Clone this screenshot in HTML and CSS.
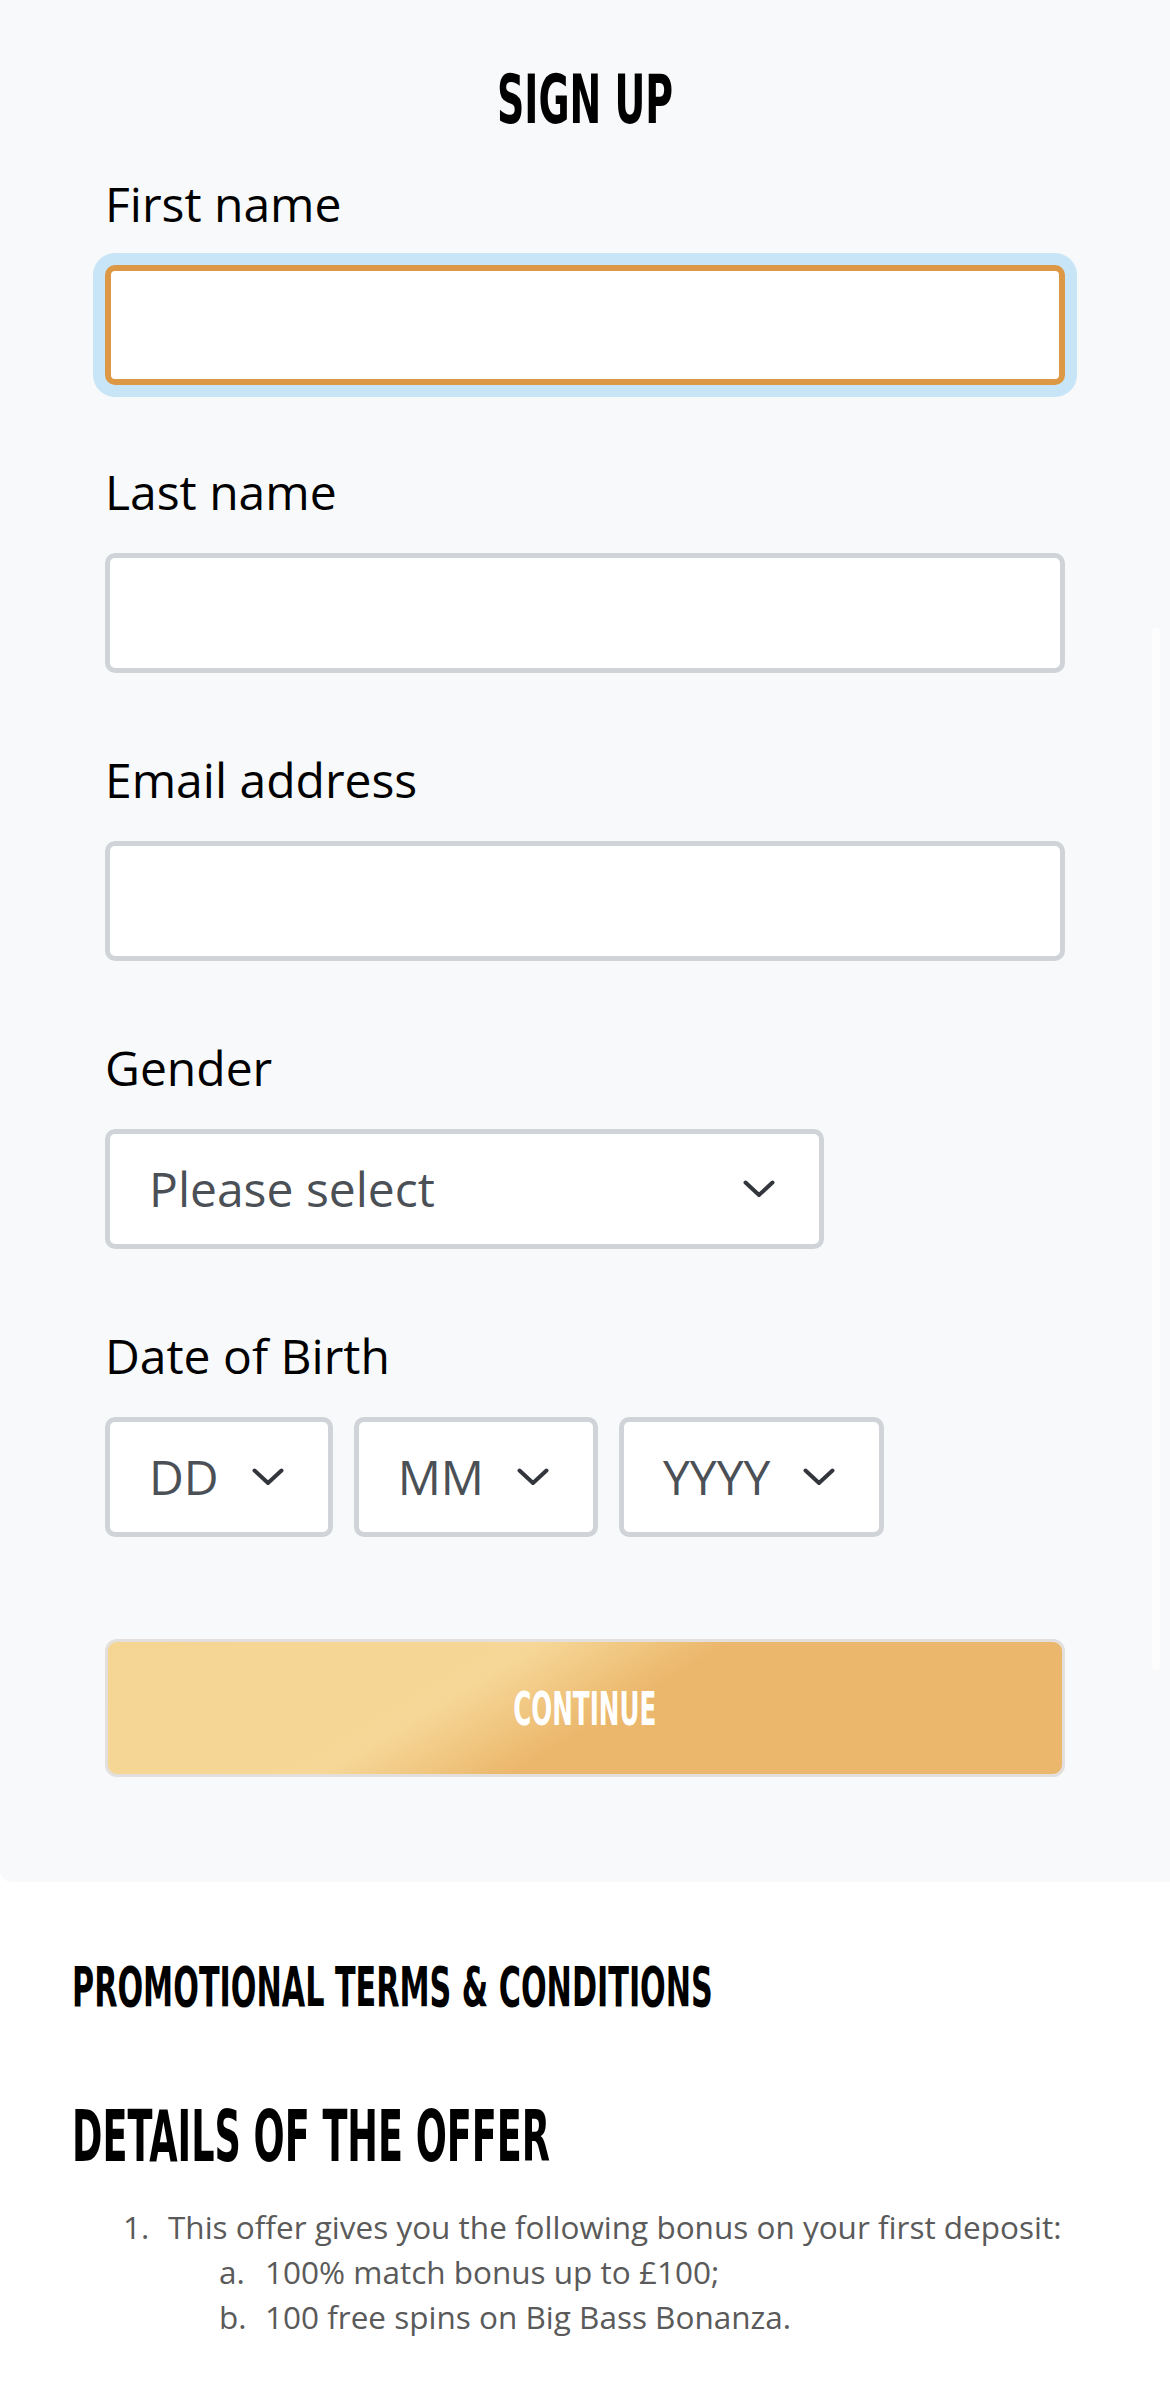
FILE: index.html
```html
<!DOCTYPE html>
<html lang="en">
<head>
<meta charset="utf-8">
<title>Sign up</title>
<link rel="stylesheet" href="styles.css">
</head>
<body>
<div class="panel">
  <h1 class="title"><span class="cond">SIGN UP</span></h1>
  <form class="form">
    <div class="field">
      <label class="label" for="fn">First name</label>
      <input class="input is-focused" id="fn" type="text">
    </div>
    <div class="field">
      <label class="label" for="ln">Last name</label>
      <input class="input" id="ln" type="text">
    </div>
    <div class="field">
      <label class="label" for="em">Email address</label>
      <input class="input" id="em" type="text">
    </div>
    <div class="field">
      <div class="label">Gender</div>
      <div class="select select-wide">
        <span class="select-text">Please select</span>
        <svg class="chev" width="32" height="18" viewBox="0 0 32 18"><polyline points="2.5,2.5 16,15 29.5,2.5" fill="none" stroke="#33373d" stroke-width="4" stroke-linecap="round" stroke-linejoin="round"/></svg>
      </div>
    </div>
    <div class="field">
      <div class="label">Date of Birth</div>
      <div class="dob">
        <div class="select">
          <span class="select-text">DD</span>
          <svg class="chev" width="32" height="18" viewBox="0 0 32 18"><polyline points="2.5,2.5 16,15 29.5,2.5" fill="none" stroke="#33373d" stroke-width="4" stroke-linecap="round" stroke-linejoin="round"/></svg>
        </div>
        <div class="select">
          <span class="select-text">MM</span>
          <svg class="chev" width="32" height="18" viewBox="0 0 32 18"><polyline points="2.5,2.5 16,15 29.5,2.5" fill="none" stroke="#33373d" stroke-width="4" stroke-linecap="round" stroke-linejoin="round"/></svg>
        </div>
        <div class="select">
          <span class="select-text">YYYY</span>
          <svg class="chev" width="32" height="18" viewBox="0 0 32 18"><polyline points="2.5,2.5 16,15 29.5,2.5" fill="none" stroke="#33373d" stroke-width="4" stroke-linecap="round" stroke-linejoin="round"/></svg>
        </div>
      </div>
    </div>
    <button class="continue" type="button"><span class="cond cond-btn">CONTINUE</span></button>
  </form>
  <div class="scroll-thumb"></div>
</div>
<section class="terms">
  <h2 class="terms-title"><span class="cond cond-terms">PROMOTIONAL TERMS &amp; CONDITIONS</span></h2>
  <h3 class="offer-title"><span class="cond cond-offer">DETAILS OF THE OFFER</span></h3>
  <ol class="offer-list">
    <li class="offer-item">
      <span class="num">1.</span>
      <div class="item-body">
        <div>This offer gives you the following bonus on your first deposit:</div>
        <ol class="sub-list">
          <li class="sub-item"><span class="num">a.</span><span>100% match bonus up to £100;</span></li>
          <li class="sub-item"><span class="num">b.</span><span>100 free spins on Big Bass Bonanza.</span></li>
        </ol>
      </div>
    </li>
  </ol>
</section>
</body>
</html>
```
FILE: styles.css
```css
* { box-sizing: border-box; }
html, body { margin: 0; padding: 0; }
body {
  background: #ffffff;
  font-family: "Open Sans", "Noto Sans", sans-serif;
  color: #000;
  width: 1170px;
}
.panel {
  position: relative;
  background: #f8f9fa;
  border-bottom-left-radius: 12px;
  padding: 63px 105px 105px 105px;
}
.cond {
  display: inline-block;
  font-family: "DejaVu Sans Condensed", "Liberation Sans", sans-serif;
  font-weight: 700;
  white-space: nowrap;
}
.title {
  margin: 0;
  text-align: center;
  font-size: 68px;
  line-height: 68px;
  font-weight: 700;
}
.title .cond { transform: scaleX(0.62); transform-origin: center; }
.form {
  margin-top: 34px;
  display: flex;
  flex-direction: column;
  gap: 71px;
}
.field { display: flex; flex-direction: column; align-items: flex-start; }
.label {
  display: block;
  font-size: 48px;
  line-height: 72px;
  margin-bottom: 25px;
  color: #000;
}
.input {
  display: block;
  width: 100%;
  height: 120px;
  border: 5px solid #d0d4d9;
  border-radius: 10px;
  background: #fff;
  font: inherit;
  font-size: 48px;
  padding: 0 39px;
  outline: none;
}
.input.is-focused {
  border: 6px solid #dc9844;
  box-shadow: 0 0 0 12px #c8e5f7;
}
.select {
  display: flex;
  align-items: center;
  height: 120px;
  border: 5px solid #d0d4d9;
  border-radius: 10px;
  background: #fff;
  padding: 0 44px 0 39px;
  gap: 33px;
}
.select-wide { width: 719px; justify-content: space-between; }
.select-text {
  font-size: 48px;
  line-height: 1;
  color: #4b5056;
}
.chev { display: block; flex: none; }
.dob { display: flex; gap: 21px; }
.continue {
  margin-top: 31px;
  height: 138px;
  width: 100%;
  border: 3px solid #e2dfdc;
  border-radius: 12px;
  background: linear-gradient(149deg, #f5d592 0%, #f6d797 37%, #ebb76c 53%, #ebb76c 100%);
  color: #fff;
  font-size: 47px;
  line-height: 1;
  padding: 0;
  display: flex;
  align-items: center;
  justify-content: center;
}
.cond-btn { transform: scaleX(0.583); transform-origin: center; color: #fff; }
.scroll-thumb {
  position: absolute;
  left: 1152px;
  top: 628px;
  width: 8px;
  height: 1042px;
  background: #fdfdfe;
  border-radius: 4px;
}
.terms { padding: 74px 72px 60px 72px; }
.terms-title {
  margin: 0;
  font-size: 56px;
  line-height: 57px;
}
.cond-terms { transform: scaleX(0.60); transform-origin: left; }
.offer-title {
  margin: 82px 0 0 0;
  font-size: 72px;
  line-height: 73px;
}
.cond-offer { transform: scaleX(0.565); transform-origin: left; }
.offer-list {
  list-style: none;
  margin: 31px 0 0 0;
  padding: 0 0 0 51px;
  font-size: 31.5px;
  line-height: 45px;
  color: #5a5a5a;
}
.offer-item { display: flex; }
.num { flex: none; width: 45px; }
.sub-list { list-style: none; margin: 0; padding: 0 0 0 51px; }
.sub-item { display: flex; }
.sub-item .num { width: 46px; }
```
